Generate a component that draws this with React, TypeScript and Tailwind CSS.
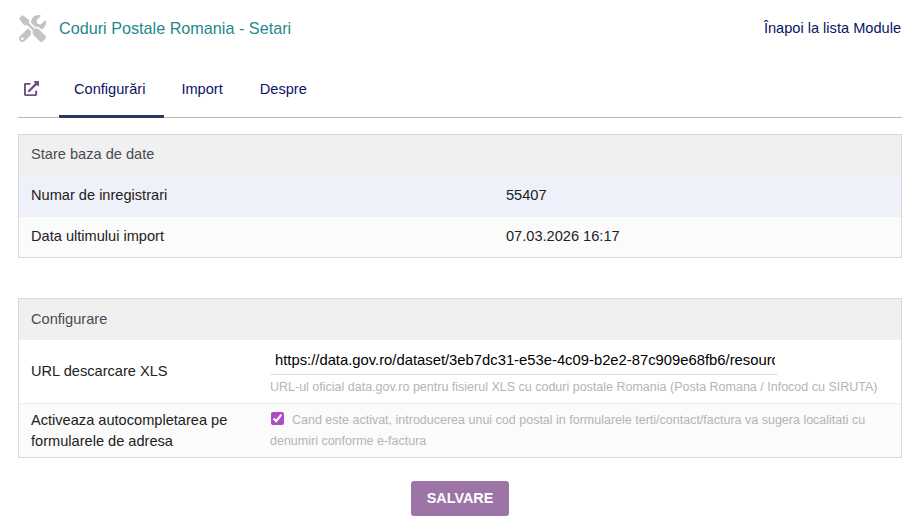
import React from 'react';
import { FaTools, FaExternalLinkAlt } from 'react-icons/fa';

const App: React.FC = () => {
  return (
    <div className="bg-white min-h-screen pl-[18px] pr-[14px] pt-[14px] font-['Liberation_Sans',Arial,sans-serif] text-[14.6px] text-[#212121]">
      {/* Title bar */}
      <div className="flex items-center justify-between h-[29px] pr-[1px]">
        <div className="flex items-center">
          <FaTools className="w-[27px] h-[27px] ml-[1px] text-[#c4c4c4]" />
          <span className="ml-[13px] text-[16.2px] text-[#25888c]">Coduri Postale Romania - Setari</span>
        </div>
        <a className="text-[#0a1464]">Înapoi la lista Module</a>
      </div>

      {/* Tabs */}
      <div className="flex items-stretch h-[75px] border-b border-[#b9b9b9]">
        <div className="w-[41px] flex items-center pt-[17px] pl-[6px]">
          <FaExternalLinkAlt className="w-[15px] h-[15px] text-[#6f4e80]" />
        </div>
        <div className="flex items-center pt-[22px] pl-[15px] pr-[19px] text-[#0a1464] border-b-[3px] border-[#263c5c] -mb-[1px] h-[75px] rounded-b-[1px]">
          Configurări
        </div>
        <div className="flex items-center pt-[19px] ml-[17px] text-[#0a1464]">Import</div>
        <div className="flex items-center pt-[19px] ml-[37px] text-[#0a1464]">Despre</div>
      </div>

      {/* Stare baza de date */}
      <div className="mt-[16px] border border-[#d8d8d8]">
        <div className="h-[41px] flex items-center px-[12px] pb-[2px] bg-[#f0f0f0] text-[#4a4a52]">Stare baza de date</div>
        <div className="h-[41px] flex items-center px-[12px] pb-[2px] bg-[#eef1f9]">
          <div className="w-[475px]">Numar de inregistrari</div>
          <div>55407</div>
        </div>
        <div className="h-[40px] flex items-center px-[12px] bg-[#fbfbfb]">
          <div className="w-[475px]">Data ultimului import</div>
          <div>07.03.2026 16:17</div>
        </div>
      </div>

      {/* Configurare */}
      <div className="mt-[40px] border border-[#d8d8d8]">
        <div className="h-[41px] flex items-center px-[12px] bg-[#f0f0f0] text-[#4a4a52]">Configurare</div>
        <div className="h-[64px] flex items-center px-[12px] bg-white border-b border-[#eeeeee]">
          <div className="w-[239px]">URL descarcare XLS</div>
          <div className="flex-1 pt-[1px]">
            <input
              readOnly
              value="https://data.gov.ro/dataset/3eb7dc31-e53e-4c09-b2e2-87c909e68fb6/resource/export.xls"
              className="block w-[508px] h-[25px] pl-[5px] pr-[3px] pb-[4px] text-[14.8px] text-black border-b border-[#dddddd] outline-none bg-transparent"
            />
            <div className="mt-[4px] text-[12.5px] leading-[16px] text-[#b4b4b4]">
              URL-ul oficial data.gov.ro pentru fisierul XLS cu coduri postale Romania (Posta Romana / Infocod cu SIRUTA)
            </div>
          </div>
        </div>
        <div className="h-[53px] flex items-center px-[12px] bg-[#fbfbfb]">
          <div className="w-[239px] leading-[21px]">
            Activeaza autocompletarea pe
            <br />
            formularele de adresa
          </div>
          <div className="flex-1 text-[12.5px] leading-[21px] text-[#b4b4b4]">
            <input type="checkbox" checked readOnly className="accent-[#ae4cc4] w-[13px] h-[13px] ml-[1px] mr-[8px] align-[-1px] inline-block" />
            Cand este activat, introducerea unui cod postal in formularele terti/contact/factura va sugera localitati cu denumiri conforme e-factura
          </div>
        </div>
      </div>

      {/* Save */}
      <div className="flex justify-center mt-[23px]">
        <button className="w-[98px] h-[35px] rounded-[3px] bg-[#9c75a6] text-white font-bold text-[14.4px]">SALVARE</button>
      </div>
    </div>
  );
};

export default App;
